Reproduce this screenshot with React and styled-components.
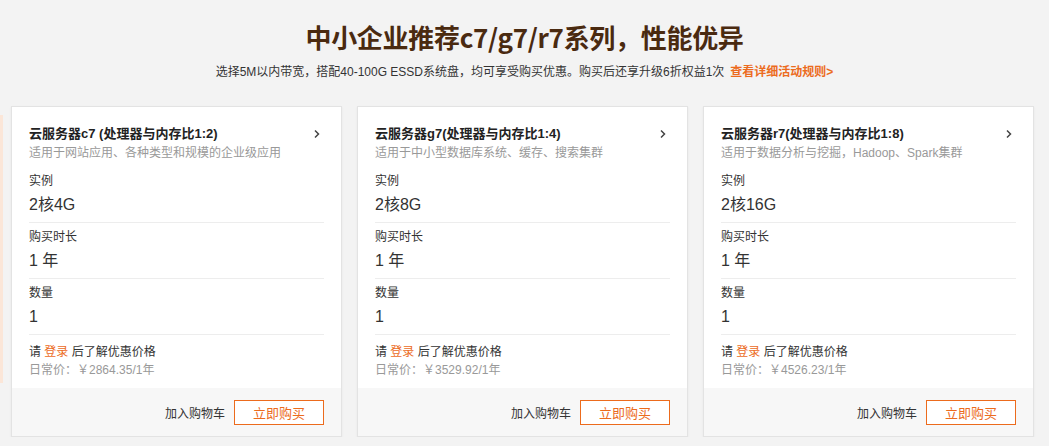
import styled, { createGlobalStyle } from "styled-components";

const GlobalStyle = createGlobalStyle`
  body {
    margin: 0;
    background: #f3f3f3;
    font-family: "Liberation Sans", "Noto Sans CJK SC", sans-serif;
    color: #333;
  }
`;

const ORANGE = "#ec6b1d";

const plans = [
  {
    name: "云服务器c7 (处理器与内存比1:2)",
    desc: "适用于网站应用、各种类型和规模的企业级应用",
    spec: "2核4G",
    price: "2864.35",
  },
  {
    name: "云服务器g7(处理器与内存比1:4)",
    desc: "适用于中小型数据库系统、缓存、搜索集群",
    spec: "2核8G",
    price: "3529.92",
  },
  {
    name: "云服务器r7(处理器与内存比1:8)",
    desc: "适用于数据分析与挖掘，Hadoop、Spark集群",
    spec: "2核16G",
    price: "4526.23",
  },
];

function Chevron() {
  return (
    <svg width="8" height="10" viewBox="0 0 8 10">
      <polyline points="2,1.5 5.5,5 2,8.5" fill="none" stroke="#444" strokeWidth="1.5" />
    </svg>
  );
}

export default function App() {
  return (
    <Page>
      <GlobalStyle />
      <Title>中小企业推荐c7/g7/r7系列，性能优异</Title>
      <Subtitle>
        选择5M以内带宽，搭配40-100G ESSD系统盘，均可享受购买优惠。购买后还享升级6折权益1次
        <RuleLink>查看详细活动规则&gt;</RuleLink>
      </Subtitle>

      <CardRow>
        <EdgeStrip />
        {plans.map((p) => (
          <Card key={p.name}>
            <CardBody>
              <CardHead>
                <CardName>{p.name}</CardName>
                <Chevron />
              </CardHead>
              <CardDesc>{p.desc}</CardDesc>

              <Field $first>
                <FieldLabel>实例</FieldLabel>
                <FieldValue>{p.spec}</FieldValue>
              </Field>
              <Field>
                <FieldLabel>购买时长</FieldLabel>
                <FieldValue>1 年</FieldValue>
              </Field>
              <Field>
                <FieldLabel>数量</FieldLabel>
                <FieldValue>1</FieldValue>
              </Field>

              <PriceBox>
                <LoginHint>
                  请 <Login>登录</Login> 后了解优惠价格
                </LoginHint>
                <DailyPrice>日常价：￥{p.price}/1年</DailyPrice>
              </PriceBox>
            </CardBody>

            <CardFoot>
              <CartLink>加入购物车</CartLink>
              <BuyButton>立即购买</BuyButton>
            </CardFoot>
          </Card>
        ))}
      </CardRow>
    </Page>
  );
}

const Page = styled.div`
  width: 1049px;
  padding-top: 19px;
`;

const Title = styled.h1`
  margin: 0;
  text-align: center;
  font-family: "Noto Sans CJK SC", sans-serif;
  font-size: 26px;
  line-height: 36px;
  font-weight: 700;
  color: #4a2a10;
  letter-spacing: -0.3px;
`;

const Subtitle = styled.p`
  margin: 8px 0 0;
  text-align: center;
  font-size: 12px;
  line-height: 18px;
  color: #333;
`;

const RuleLink = styled.a`
  margin-left: 6px;
  color: ${ORANGE};
  font-weight: 700;
  cursor: pointer;
`;

const CardRow = styled.div`
  display: flex;
  align-items: flex-start;
  gap: 15px;
  margin-top: 25px;
`;

const EdgeStrip = styled.div`
  width: 3px;
  height: 268px;
  margin-top: 9px;
  margin-right: -7px;
  background: #fbe6d8;
`;

const Card = styled.div`
  box-sizing: border-box;
  width: 331px;
  background: #fff;
  border: 1px solid #e3e3e3;
  box-shadow: 0 1px 2px rgba(0, 0, 0, 0.06);
`;

const CardBody = styled.div`
  padding: 17px 17px 9px;
`;

const CardHead = styled.div`
  display: flex;
  align-items: center;
  justify-content: space-between;
  padding-right: 3px;
`;

const CardName = styled.div`
  font-size: 13px;
  line-height: 20px;
  font-weight: 700;
  color: #222;
`;

const CardDesc = styled.div`
  font-size: 12px;
  line-height: 18px;
  color: #999;
`;

const Field = styled.div`
  padding: ${(p) => (p.$first ? "10px" : "5px")} 0 5px;
  border-bottom: 1px solid #ededed;
`;

const FieldLabel = styled.div`
  font-size: 12px;
  line-height: 18px;
  color: #333;
`;

const FieldValue = styled.div`
  margin-top: 3px;
  font-size: 16px;
  line-height: 24px;
  color: #333;
`;

const PriceBox = styled.div`
  margin-top: 8px;
  font-size: 12px;
  line-height: 18px;
`;

const LoginHint = styled.div`
  color: #333;
`;

const Login = styled.span`
  color: ${ORANGE};
`;

const DailyPrice = styled.div`
  color: #999;
`;

const CardFoot = styled.div`
  display: flex;
  align-items: center;
  justify-content: flex-end;
  gap: 9px;
  height: 48px;
  padding: 0 17px;
  background: #f7f7f7;
`;

const CartLink = styled.span`
  font-size: 12px;
  color: #333;
`;

const BuyButton = styled.button`
  box-sizing: border-box;
  width: 90px;
  height: 25px;
  background: #fff;
  border: 1px solid ${ORANGE};
  color: ${ORANGE};
  font-family: "Liberation Sans", "Noto Sans CJK SC", sans-serif;
  font-size: 13px;
  cursor: pointer;
`;
